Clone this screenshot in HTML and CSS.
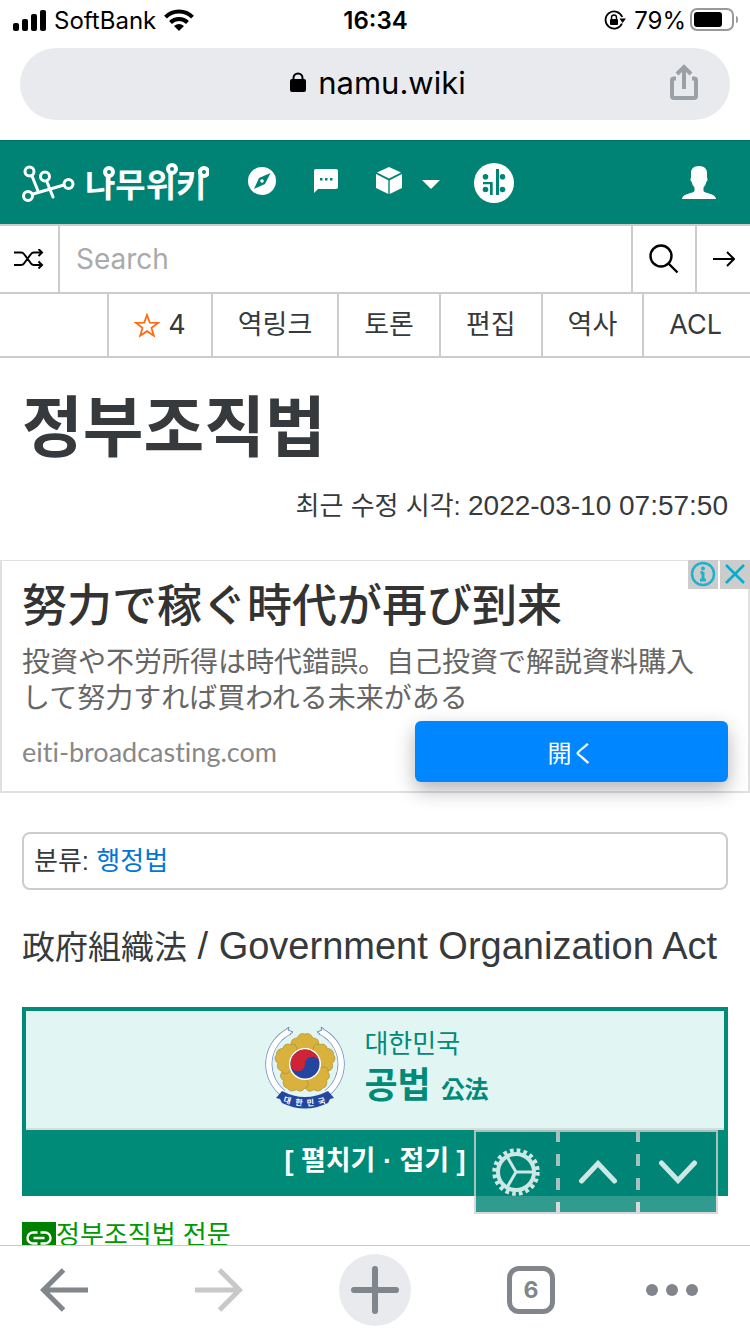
FILE: index.html
```html
<!DOCTYPE html>
<html lang="ko">
<head>
  <meta charset="UTF-8" />
  <meta name="viewport" content="width=device-width, initial-scale=1.0" />
  <title>정부조직법 - 나무위키</title>
  <link rel="stylesheet" href="styles.css">
</head>
<body>
<div class="status-bar">
  <div class="status-left">
    <svg width="33" height="21" viewBox="0 0 33 21">
      <rect x="0" y="13" width="6" height="8" rx="2"/>
      <rect x="9" y="9" width="6" height="12" rx="2"/>
      <rect x="18" y="4" width="6" height="17" rx="2"/>
      <rect x="27" y="0" width="6" height="21" rx="2"/>
    </svg>
    <span>SoftBank</span>
    <svg width="30" height="22" viewBox="0 0 30 22">
      <g fill="none" stroke="#000" stroke-width="4">
        <path d="M1.500 8.200 A19 19 0 0 1 28.500 8.200"/>
        <path d="M6.500 13.500 A12 12 0 0 1 23.500 13.500"/>
      </g>
      <path d="M10 17 Q15 13 20 17 L15 22 Z"/>
    </svg>
  </div>
  <span class="status-time">16:34</span>
  <div class="status-right">
    <svg width="22" height="20" viewBox="0 0 22 20">
      <path d="M18 13.500 A8.600 8.600 0 1 1 18.200 7" fill="none" stroke="#000" stroke-width="1.800"/>
      <path d="M15.500 8.500 H22 L18.600 13 Z"/>
      <rect x="6" y="9" width="8" height="6" rx="1"/>
      <path d="M7.500 9.500 V7.500 A2.500 2.500 0 0 1 12.500 7.500 V9.500" fill="none" stroke="#000" stroke-width="1.400"/>
    </svg>
    <span>79%</span>
    <svg class="battery" width="48" height="24" viewBox="0 0 48 24">
      <rect x="1" y="1" width="42" height="21" rx="6" fill="none" stroke="#999" stroke-width="2"/>
      <rect x="4" y="4" width="28" height="15" rx="3"/>
      <path d="M46 8 Q48 8 48 11.500 Q48 15 46 15 Z" fill="#999"/>
    </svg>
  </div>
</div>

<div class="address-bar">
  <div class="address">
    <svg width="16" height="21" viewBox="0 0 16 21">
      <rect x="0" y="7" width="16" height="13" rx="2"/>
      <path d="M3.500 8 V6 A4.500 4.500 0 0 1 12.500 6 V8" fill="none" stroke="#000" stroke-width="2"/>
    </svg>
    <span>namu.wiki</span>
  </div>
  <button class="share" aria-label="공유">
    <svg width="28" height="36" viewBox="0 0 28 36" fill="none" stroke="#9aa0a6" stroke-width="4">
      <path d="M6 14.500 H4 Q2 14.500 2 16.500 V32 Q2 34 4 34 H24 Q26 34 26 32 V16.500 Q26 14.500 24 14.500 H22"/>
      <path d="M14 25 V3 M7 10 L14 3 L21 10"/>
    </svg>
  </button>
</div>

<div class="page">
  <header class="navbar">
    <a class="logo" href="#" aria-label="나무위키">
      <svg width="54" height="40" viewBox="22 162 54 40" fill="none" stroke="#fff" stroke-width="3">
        <path d="M33 193 L64 184 M32 175 L38 190 M47 181 L53 196" stroke-linecap="round"/>
        <circle cx="29.500" cy="170.500" r="4.500"/>
        <circle cx="45" cy="175.500" r="4.500"/>
        <circle cx="68.500" cy="183" r="4.500"/>
        <circle cx="28" cy="195" r="4.500"/>
      </svg>
      <span class="wordmark">나무위키
        <svg class="wordmark-nodes" width="124" height="40" viewBox="85 163 124 40" fill="#008375" stroke="#fff" stroke-width="4">
          <circle cx="109" cy="172" r="4"/>
          <circle cx="172" cy="169" r="4"/>
          <circle cx="204" cy="172" r="4"/>
        </svg>
      </span>
    </a>
    <nav class="nav-icons">
      <a href="#" aria-label="최근 변경">
        <svg width="28" height="28" viewBox="0 0 28 28">
          <circle cx="14" cy="14" r="14" fill="#fff"/>
          <path d="M22.500 6 L17 17 L6 22 L11 11 Z" fill="#008375"/>
          <circle cx="14" cy="14" r="1.800" fill="#fff"/>
        </svg>
      </a>
      <a href="#" aria-label="최근 토론">
        <svg width="24" height="24" viewBox="0 0 24 24">
          <path d="M2 0 H22 Q24 0 24 2 V18 Q24 20 22 20 H4 L0 24 V2 Q0 0 2 0 Z" fill="#fff"/>
          <path d="M6 9 h2.500 v2.500 h-2.500 Z M11 9 h2.500 v2.500 h-2.500 Z M16 9 h2.500 v2.500 h-2.500 Z" fill="#008375"/>
        </svg>
      </a>
      <a class="tools" href="#" aria-label="특수 기능">
        <svg width="26" height="27" viewBox="0 0 26 27" fill="#fff">
          <path d="M13 0 L25 5.500 L13 11.500 L1 5.500 Z"/>
          <path d="M0 7 L12.300 13.200 V27 L0 21 Z"/>
          <path d="M26 7 L13.700 13.200 V27 L26 21 Z"/>
        </svg>
        <svg class="caret" width="18" height="9" viewBox="0 0 18 9"><path d="M0 0 H18 L9 9 Z" fill="#fff"/></svg>
      </a>
      <a class="arca" href="#" aria-label="아카라이브">
        <svg width="40" height="40" viewBox="0 0 40 40">
          <circle cx="20" cy="20" r="20" fill="#fff"/>
          <g fill="#008375">
            <circle cx="11.500" cy="13.700" r="2.800"/>
            <circle cx="28.500" cy="13.700" r="2.800"/>
            <circle cx="11.500" cy="26.500" r="2.800"/>
            <circle cx="28.500" cy="26.500" r="2.800"/>
            <path d="M9 19 H18.700 V32 H16 V21.300 H9 Z"/>
            <path d="M22 6 H25 V32 H22 Z"/>
          </g>
        </svg>
      </a>
    </nav>
    <a class="user" href="#" aria-label="사용자">
      <svg width="34" height="33" viewBox="0 0 34 33" fill="#fff">
        <path d="M17 0 C22.500 0 25 3 25 7 V12 C26 12 25.500 15.500 24.200 16 C23.800 18.500 22.800 20 21.500 21.500 V25 C22 27.500 33.500 27 34 33 H0 C0.500 27 12 27.500 12.500 25 V21.500 C11.200 20 10.200 18.500 9.800 16 C8.500 15.500 8 12 9 12 V7 C9 3 11.500 0 17 0 Z"/>
      </svg>
    </a>
  </header>

  <form class="search">
    <button type="button" class="random" aria-label="임의 문서">
      <svg width="30" height="20" viewBox="0 0 30 20" fill="none" stroke="#000" stroke-width="2">
        <path d="M0 3.500 H7 Q9 3.500 10 5 L17 14.500 Q18 16 20 16 H28 M0 16 H7 Q9 16 10 14.500 L17 5 Q18 3.500 20 3.500 H28"/>
        <path d="M24.500 0 L28 3.500 L24.500 7 M24.500 12.500 L28 16 L24.500 19.500"/>
      </svg>
    </button>
    <input type="text" placeholder="Search" aria-label="검색">
    <button type="button" class="find" aria-label="검색">
      <svg width="30" height="30" viewBox="0 0 30 30" fill="none" stroke="#000" stroke-width="2.400">
        <circle cx="12" cy="12" r="10.500"/>
        <path d="M19.500 19.500 L28.500 28.500"/>
      </svg>
    </button>
    <button type="button" class="go" aria-label="이동">
      <svg width="22" height="16" viewBox="0 0 22 16" fill="none" stroke="#000" stroke-width="2">
        <path d="M0 8 H21 M14 1 L21 8 L14 15"/>
      </svg>
    </button>
  </form>

  <nav class="tabs">
    <a class="star" href="#">
      <svg width="26" height="25" viewBox="0 0 26 25" fill="none" stroke="#ff6a13" stroke-width="1.800">
        <path d="M13 2 L15.800 9.700 L24 9.900 L17.500 14.900 L19.800 22.700 L13 18.200 L6.200 22.700 L8.500 14.900 L2 9.900 L10.200 9.700 Z"/>
      </svg>
      <span>4</span>
    </a>
    <a href="#">역링크</a>
    <a href="#">토론</a>
    <a href="#">편집</a>
    <a href="#">역사</a>
    <a href="#">ACL</a>
  </nav>

  <main>
    <h1>정부조직법</h1>
    <p class="modified">최근 수정 시각: <time>2022-03-10 07:57:50</time></p>

    <aside class="ad" lang="ja">
      <div class="ad-badges">
        <button aria-label="広告について">
          <svg width="30" height="29" viewBox="0 0 30 29" fill="none" stroke="#22b1cc">
            <circle cx="15" cy="14" r="11" stroke-width="2.500"/>
            <path d="M15 12 V20 M12.500 12.500 H15 M12 20 H18" stroke-width="3"/>
            <circle cx="15" cy="8.500" r="1" stroke-width="2"/>
          </svg>
        </button>
        <button aria-label="閉じる">
          <svg width="30" height="29" viewBox="0 0 30 29" fill="none" stroke="#00aecd" stroke-width="2.500">
            <path d="M6 5 L24 23 M24 5 L6 23"/>
          </svg>
        </button>
      </div>
      <h2>努力で稼ぐ時代が再び到来</h2>
      <p>投資や不労所得は時代錯誤。自己投資で解説資料購入<br>して努力すれば買われる未来がある</p>
      <div class="ad-footer">
        <a href="#">eiti-broadcasting.com</a>
        <button class="ad-open">開く</button>
      </div>
    </aside>

    <div class="category">분류: <a href="#">행정법</a></div>

    <h3 class="subtitle"><span class="hanja">政府組織法</span> / Government Organization Act</h3>

    <section class="law-box">
      <div class="law-title">
        <svg width="80" height="82" viewBox="0 0 80 82">
          <g fill="none" stroke="#6d86c5" stroke-width="7">
            <path d="M25 4 A36.500 36.500 0 0 0 18 66"/>
            <path d="M55 4 A36.500 36.500 0 0 1 62 66"/>
          </g>
          <g fill="none" stroke="#fff" stroke-width="5.600">
            <path d="M25 4 A36.500 36.500 0 0 0 18 66"/>
            <path d="M55 4 A36.500 36.500 0 0 1 62 66"/>
          </g>
          <path d="M21 2 L24 0 L23 3 L28 5 L25 7 M59 2 L56 0 L57 3 L52 5 L55 7" fill="#fff" stroke="#6d86c5" stroke-width="1"/>
          <circle cx="40" cy="37" r="22" fill="#a98b35"/>
          <g fill="#d8b23c" stroke="#a98b35" stroke-width="0.600">
            <path d="M40 37 L29 25 Q22 22 26 17 Q26 11 32 11 Q35 5 40 7 Q45 5 48 11 Q54 11 54 17 Q58 22 51 25 Z"/>
            <path transform="rotate(72 40 37)" d="M40 37 L29 25 Q22 22 26 17 Q26 11 32 11 Q35 5 40 7 Q45 5 48 11 Q54 11 54 17 Q58 22 51 25 Z"/>
            <path transform="rotate(144 40 37)" d="M40 37 L29 25 Q22 22 26 17 Q26 11 32 11 Q35 5 40 7 Q45 5 48 11 Q54 11 54 17 Q58 22 51 25 Z"/>
            <path transform="rotate(216 40 37)" d="M40 37 L29 25 Q22 22 26 17 Q26 11 32 11 Q35 5 40 7 Q45 5 48 11 Q54 11 54 17 Q58 22 51 25 Z"/>
            <path transform="rotate(288 40 37)" d="M40 37 L29 25 Q22 22 26 17 Q26 11 32 11 Q35 5 40 7 Q45 5 48 11 Q54 11 54 17 Q58 22 51 25 Z"/>
          </g>
          <circle cx="40" cy="37" r="16" fill="#fff"/>
          <circle cx="40" cy="37" r="14.500" fill="#2546a0"/>
          <path d="M25.500 37 A14.500 14.500 0 0 1 54.500 37 A7.250 7.250 0 0 0 40 37 A7.250 7.250 0 0 1 25.500 37 Z" fill="#cf2436"/>
          <path d="M17 64 Q40 76 63 64 L69 71 L65 72 L63 76 Q40 87 17 76 L15 72 L11 71 Z" fill="#2546a0"/>
          <text class="ribbon" x="18 30 42 54" y="75 78 79 78" rotate="16 6 -5 -16">대한민국</text>
        </svg>
        <div class="law-name">
          <span>대한민국</span>
          <strong>공법 <small>公法</small></strong>
        </div>
      </div>
      <button class="law-toggle">[ 펼치기 · 접기 ]</button>
    </section>

    <a class="full-text" href="#">
      <span class="link-icon">
        <svg width="26" height="14" viewBox="0 0 26 14" fill="none" stroke="#fff" stroke-width="2.400">
          <path d="M11.500 1.500 H7 A5.500 5.500 0 0 0 7 12.500 H11.500 M14.500 1.500 H19 A5.500 5.500 0 0 1 19 12.500 H14.500 M7.500 7 H18.500"/>
        </svg>
      </span>정부조직법 전문
    </a>
  </main>

  <div class="floating">
    <button aria-label="설정">
      <svg width="48" height="48" viewBox="0 0 48 48" fill="none" stroke="#fff">
        <circle cx="24" cy="24" r="18" stroke-width="4"/>
        <circle cx="24" cy="24" r="21.500" stroke-width="4.500" stroke-dasharray="3.700 3.055"/>
        <path d="M24 24 H42 M24 24 L15 8.500 M24 24 L15 39.500" stroke-width="3"/>
      </svg>
    </button>
    <button aria-label="위로">
      <svg width="38" height="24" viewBox="0 0 38 24"><path d="M2.500 21 L19 3.500 L35.500 21" fill="none" stroke="#fff" stroke-width="5" stroke-linecap="round"/></svg>
    </button>
    <button aria-label="아래로">
      <svg width="38" height="24" viewBox="0 0 38 24"><path d="M2.500 3 L19 20.500 L35.500 3" fill="none" stroke="#fff" stroke-width="5" stroke-linecap="round"/></svg>
    </button>
  </div>
</div>

<div class="toolbar">
  <button aria-label="뒤로">
    <svg width="48" height="44" viewBox="0 0 48 44" fill="none" stroke="#80868b" stroke-width="5"><path d="M48 22 H4 M23.500 2 L3.500 22 L23.500 42"/></svg>
  </button>
  <button aria-label="앞으로">
    <svg width="48" height="44" viewBox="0 0 48 44" fill="none" stroke="#c8c8c8" stroke-width="5"><path d="M0 22 H44 M24.500 2 L44.500 22 L24.500 42"/></svg>
  </button>
  <button class="new-tab" aria-label="새 탭">
    <svg width="48" height="48" viewBox="0 0 48 48"><path d="M24 3 V45 M3 24 H45" stroke="#80868b" stroke-width="6" stroke-linecap="round"/></svg>
  </button>
  <button class="tab-count" aria-label="탭 6개"><span>6</span></button>
  <button aria-label="메뉴">
    <svg width="52" height="12" viewBox="0 0 52 12" fill="#80868b">
      <circle cx="6" cy="6" r="6"/><circle cx="26" cy="6" r="6"/><circle cx="46" cy="6" r="6"/>
    </svg>
  </button>
</div>
</body>
</html>
```
FILE: styles.css
```css
* {
  box-sizing: border-box;
  margin: 0;
  padding: 0;
}

body {
  display: flex;
  flex-direction: column;
  height: 100vh;
  background-color: #fff;
  color: #373a3c;
  font-family: "Liberation Sans", "Noto Sans CJK KR", sans-serif;
  font-size: 26px;
}

button {
  background: none;
  border: none;
  font: inherit;
  color: inherit;
  cursor: pointer;
}

a {
  color: inherit;
  text-decoration: none;
}

svg {
  display: block;
  flex-shrink: 0;
}

/* phone status bar */
.status-bar {
  display: grid;
  grid-template-columns: 1fr auto 1fr;
  align-items: center;
  height: 40px;
  padding: 0 12px 0 13px;
  color: #000;
  font-family: Inter, sans-serif;
  font-size: 24px;
}

.status-left,
.status-right {
  display: flex;
  align-items: center;
  gap: 8px;
}

.status-right {
  justify-content: flex-end;
}

.battery {
  margin-left: -4px;
}

.status-time {
  font-weight: 600;
}

/* browser address bar */
.address-bar {
  position: relative;
  display: flex;
  align-items: center;
  justify-content: center;
  height: 72px;
  margin: 8px 20px 20px;
  padding: 0 0 4px 6px;
  border-radius: 36px;
  background-color: #e8eaed;
}

.address {
  display: flex;
  align-items: center;
  gap: 12px;
  color: #000;
  font-family: Inter, sans-serif;
  font-size: 31px;
}

.share {
  position: absolute;
  right: 32px;
}

.page {
  position: relative;
  flex: 1;
  min-height: 0;
  overflow: hidden;
}

.navbar {
  display: flex;
  align-items: center;
  height: 84px;
  padding: 0 34px 0 22px;
  border-top: 1px solid #006b60;
  background-color: #008375;
}

.logo {
  display: flex;
  align-items: center;
  gap: 9px;
}

.wordmark {
  position: relative;
  width: 124px;
  color: #fff;
  font-family: "Noto Sans CJK KR", sans-serif;
  font-size: 33px;
  font-weight: 700;
  line-height: 40px;
  white-space: nowrap;
}

.wordmark-nodes {
  position: absolute;
  top: 0;
  left: 0;
}

.nav-icons {
  display: flex;
  align-items: center;
  gap: 38px;
  margin-left: 39px;
}

.nav-icons a {
  padding-bottom: 4px;
}

.tools {
  display: flex;
  align-items: center;
  gap: 20px;
}

.caret {
  margin-top: 8px;
}

.nav-icons .arca {
  margin-left: -4px;
  padding-bottom: 0;
}

.user {
  margin-left: auto;
}

.search {
  display: flex;
  height: 70px;
  border-top: 2px solid #ccc;
  border-bottom: 2px solid #ccc;
}

.search button {
  display: flex;
  align-items: center;
  justify-content: center;
  border-left: 2px solid #ccc;
}

.search .random {
  width: 58px;
  border-left: none;
}

.search .find {
  width: 64px;
}

.search .go {
  width: 55px;
}

.search input {
  flex: 1;
  min-width: 0;
  padding: 0 16px;
  border: none;
  border-left: 2px solid #ccc;
  outline: none;
  font-family: Inter, sans-serif;
  font-size: 28px;
}

.search input::placeholder {
  color: #aaa;
}

.tabs {
  display: flex;
  justify-content: flex-end;
  height: 64px;
  border-bottom: 2px solid #ccc;
  font-family: Inter, "Noto Sans CJK KR", sans-serif;
  font-size: 27px;
  line-height: 60px;
}

.tabs a {
  display: flex;
  align-items: center;
  padding: 0 25px;
  border-left: 2px solid #ccc;
}

.tabs a:last-child {
  padding-right: 28px;
}

.tabs .star {
  gap: 8px;
}

main {
  padding: 0 22px;
}

h1 {
  padding-top: 26px;
  font-family: "Noto Sans CJK KR", sans-serif;
  font-size: 66px;
  font-weight: 700;
  line-height: 76px;
}

.modified {
  margin: 30px 0 38px;
  line-height: 32px;
  text-align: right;
}

.modified time {
  font-size: 28px;
}

.ad {
  position: relative;
  height: 233px;
  margin: 0 -22px;
  padding: 10px 20px;
  border: 2px solid #e0e0e0;
  border-top-width: 1px;
  font-family: "Noto Sans CJK JP", sans-serif;
}

.ad-badges {
  position: absolute;
  top: -1px;
  right: -2px;
  display: flex;
  gap: 2px;
}

.ad-badges button {
  background-color: #ccc;
}

.ad h2 {
  color: #333;
  font-size: 45px;
  font-weight: 500;
  line-height: 64px;
}

.ad p {
  margin-top: 7px;
  color: #666;
  font-size: 28px;
  line-height: 36px;
}

.ad-footer {
  display: flex;
  align-items: center;
  justify-content: space-between;
  margin-top: 7px;
}

.ad-footer a {
  color: #888;
  font-family: Lato, sans-serif;
  font-size: 27px;
  font-variant-ligatures: none;
}

.ad-open {
  width: 313px;
  height: 61px;
  border-radius: 6px;
  background-color: #0087ff;
  box-shadow: 0 8px 20px rgba(0, 0, 20, 0.3);
  color: #fff;
  font-size: 24px;
}

.category {
  height: 58px;
  margin-top: 39px;
  padding: 0 10px;
  border: 2px solid #ccc;
  border-radius: 8px;
  line-height: 54px;
}

.category a {
  color: #0275d8;
}

.subtitle {
  margin: 32px 0 35px;
  font-size: 38px;
  font-weight: 400;
  line-height: 48px;
  white-space: nowrap;
}

.hanja {
  font-size: 33px;
}

.law-box {
  border: 4px solid #008a78;
  border-bottom: none;
  background-color: #e1f5f3;
  color: #008a78;
}

.law-title {
  display: flex;
  align-items: center;
  justify-content: center;
  gap: 19px;
  height: 119px;
  padding: 0 0 4px 4px;
  border-bottom: 2px solid #d8dcdb;
}

.law-name {
  display: flex;
  flex-direction: column;
}

.law-name span {
  line-height: 40px;
}

.law-name strong {
  font-size: 36px;
  line-height: 44px;
}

.law-name small {
  font-size: 24px;
}

.ribbon {
  fill: #fff;
  font-family: "Noto Sans CJK KR", sans-serif;
  font-size: 8px;
  font-weight: 700;
}

.law-toggle {
  display: block;
  width: 100%;
  height: 66px;
  padding-bottom: 10px;
  background-color: #008a78;
  color: #fff;
  font-size: 27px;
  font-weight: 700;
}

.full-text {
  display: flex;
  align-items: flex-start;
  height: 32px;
  margin-top: 26px;
  color: #090;
  line-height: 26px;
}

.link-icon {
  display: flex;
  align-items: center;
  justify-content: center;
  width: 34px;
  height: 32px;
  background-color: #008000;
}

/* page controls that stay over the article */
.floating {
  position: absolute;
  right: 32px;
  bottom: 31px;
  display: flex;
  height: 84px;
  border: 2px solid #d0d0d0;
  background-color: #008375;
  opacity: 0.8;
}

.floating button {
  display: flex;
  align-items: center;
  justify-content: center;
  width: 80px;
}

.floating button + button {
  padding-left: 4px;
  background: repeating-linear-gradient(#d0d0d0 0 10px, transparent 10px 22px, #d0d0d0 22px 24px) left top / 4px 100% no-repeat;
}

/* browser toolbar */
.toolbar {
  display: grid;
  grid-template-columns: 128fr 182fr 130fr 182fr 100fr;
  align-items: center;
  justify-items: center;
  height: 89px;
  padding-right: 28px;
  border-top: 1px solid #c8c8c8;
}

.toolbar button {
  display: flex;
  align-items: center;
  justify-content: center;
}

.new-tab {
  width: 72px;
  height: 72px;
  border-radius: 50%;
  background-color: #e8eaed;
}

.toolbar .tab-count {
  width: 48px;
  height: 48px;
  border: 5px solid #80868b;
  border-radius: 12px;
  color: #80868b;
  font-family: Inter, sans-serif;
  font-size: 23px;
  font-weight: 700;
}
```
